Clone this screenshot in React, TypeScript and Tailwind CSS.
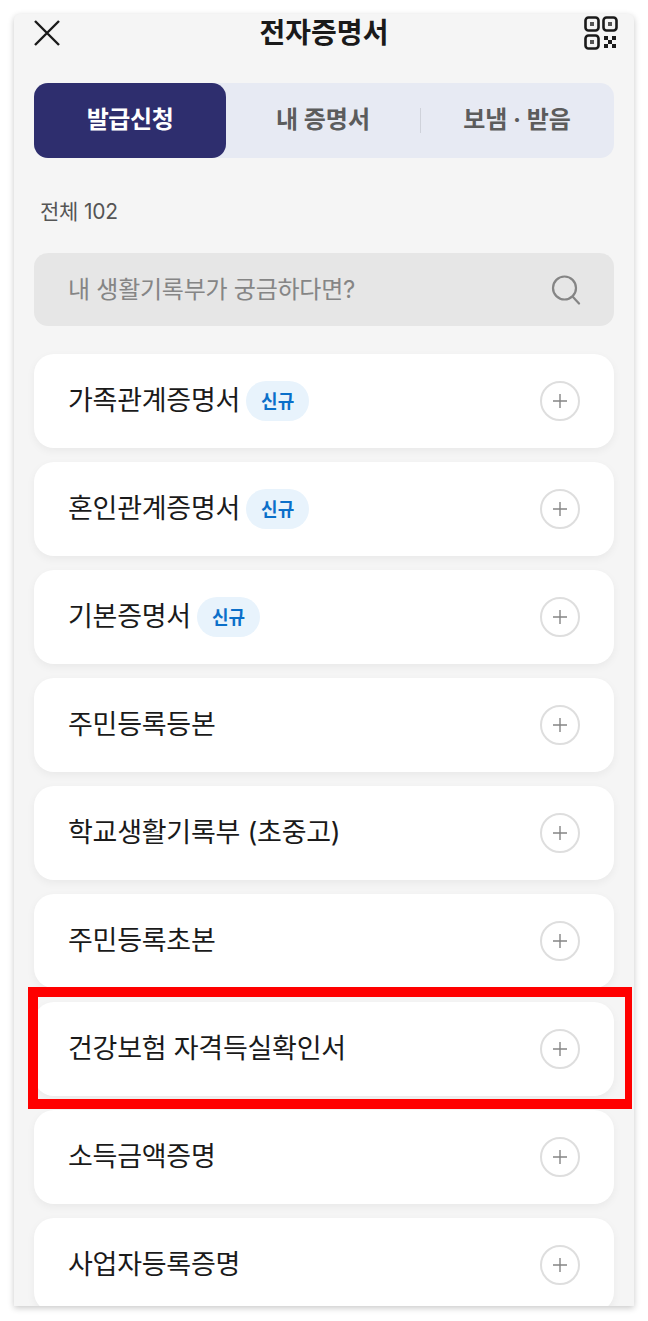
import React from 'react';

const certificates = [
  { name: '가족관계증명서', isNew: true },
  { name: '혼인관계증명서', isNew: true },
  { name: '기본증명서', isNew: true },
  { name: '주민등록등본', isNew: false },
  { name: '학교생활기록부 (초중고)', isNew: false },
  { name: '주민등록초본', isNew: false },
  { name: '건강보험 자격득실확인서', isNew: false },
  { name: '소득금액증명', isNew: false },
  { name: '사업자등록증명', isNew: false },
];

const CloseIcon = () => (
  <svg width="26" height="26" viewBox="0 0 26 26" fill="none" stroke="#1a1a1a" strokeWidth="2.4">
    <path d="M1 1 L25 25 M25 1 L1 25" />
  </svg>
);

const QrIcon = () => (
  <svg width="34" height="34" viewBox="0 0 34 34" fill="none">
    <rect x="1.5" y="1.5" width="13" height="13" rx="3" stroke="#1a1a1a" strokeWidth="2.6" />
    <rect x="19.5" y="1.5" width="13" height="13" rx="3" stroke="#1a1a1a" strokeWidth="2.6" />
    <rect x="1.5" y="19.5" width="13" height="13" rx="3" stroke="#1a1a1a" strokeWidth="2.6" />
    <rect x="6" y="6" width="4" height="4" fill="#555" />
    <rect x="24" y="6" width="4" height="4" fill="#555" />
    <rect x="6" y="24" width="4" height="4" fill="#555" />
    <path d="M20 20h4v4h-4z M28 20h4v4h-4z M24 24h4v4h-4z M20 28h4v4h-4z M28 28h4v4h-4z" fill="#1a1a1a" />
  </svg>
);

const SearchIcon = () => (
  <svg width="30" height="30" viewBox="0 0 30 30" fill="none" stroke="#858585" strokeWidth="2.2" strokeLinecap="round">
    <circle cx="13.5" cy="13" r="11.5" />
    <path d="M22 22 L28 28.5" />
  </svg>
);

const PlusIcon = () => (
  <svg width="16" height="16" viewBox="0 0 16 16" fill="none" stroke="#858585" strokeWidth="1.4">
    <path d="M8 1 V15 M1 8 H15" />
  </svg>
);

export default function App() {
  return (
    <div className="relative h-[1321px] w-[648px] bg-white pt-[14px] font-['Inter','Noto_Sans_CJK_KR',sans-serif]">
      <div className="mx-[14px] h-[1292px] overflow-hidden rounded-t-md bg-[#f5f5f5] px-5 shadow-[0_2px_6px_rgba(0,0,0,0.22)]">
        {/* Header */}
        <div className="flex h-[38px] items-center justify-between">
          <CloseIcon />
          <h1 className="pl-[4px] text-[28px] font-bold text-[#1a1a1a]">전자증명서</h1>
          <div className="-mr-[4px]">
            <QrIcon />
          </div>
        </div>

        {/* Tabs */}
        <div className="mt-[31px] grid h-[75px] grid-cols-[192px_1fr_1fr] rounded-[14px] bg-[#e7eaf3] text-[24px] font-bold">
          <div className="flex items-center justify-center rounded-[14px] bg-[#2e2e6e] pb-[2px] tracking-[-0.4px] text-white">발급신청</div>
          <div className="flex items-center justify-center pb-[2px] text-[#5c5c5c]">내 증명서</div>
          <div className="relative flex items-center justify-center pb-[2px] text-[#5c5c5c]">
            <span className="absolute left-0 top-[25px] h-[25px] w-[1px] bg-[#cfd2da]" />
            보냄 · 받음
          </div>
        </div>

        <p className="mt-[39px] pl-[6px] text-[21px] leading-[30px] tracking-[-0.2px] text-[#555555]">전체 102</p>

        {/* Search */}
        <div className="mt-[26px] flex h-[73px] items-center justify-between rounded-[14px] bg-[#e6e6e6] pl-[34px] pr-[33px]">
          <span className="text-[24px] tracking-[-0.25px] text-[#858585]">내 생활기록부가 궁금하다면?</span>
          <SearchIcon />
        </div>

        {/* Certificate list */}
        <ul className="mt-[28px] flex flex-col gap-[14px]">
          {certificates.map((item) => (
            <li
              key={item.name}
              className="flex h-[94px] shrink-0 items-center justify-between rounded-[20px] bg-white pl-[34px] pr-[34px] shadow-[0_3px_8px_rgba(0,0,0,0.05)]"
            >
              <div className="flex items-center gap-[6px]">
                <span className="text-[27px] tracking-[-0.25px] text-[#1a1a1a]">{item.name}</span>
                {item.isNew && (
                  <span className="flex h-[40px] w-[63px] items-center justify-center rounded-full bg-[#e8f3fc] text-[18px] font-bold text-[#0b6fc9]">
                    신규
                  </span>
                )}
              </div>
              <span className="flex h-[40px] w-[40px] items-center justify-center rounded-full border-2 border-[#dedede] bg-white">
                <PlusIcon />
              </span>
            </li>
          ))}
        </ul>
      </div>

      {/* Red highlight drawn over the screenshot */}
      <div className="absolute left-[28px] top-[987px] h-[122px] w-[604px] border-[10px] border-r-[7px] border-[#ff0000]" />
    </div>
  );
}
